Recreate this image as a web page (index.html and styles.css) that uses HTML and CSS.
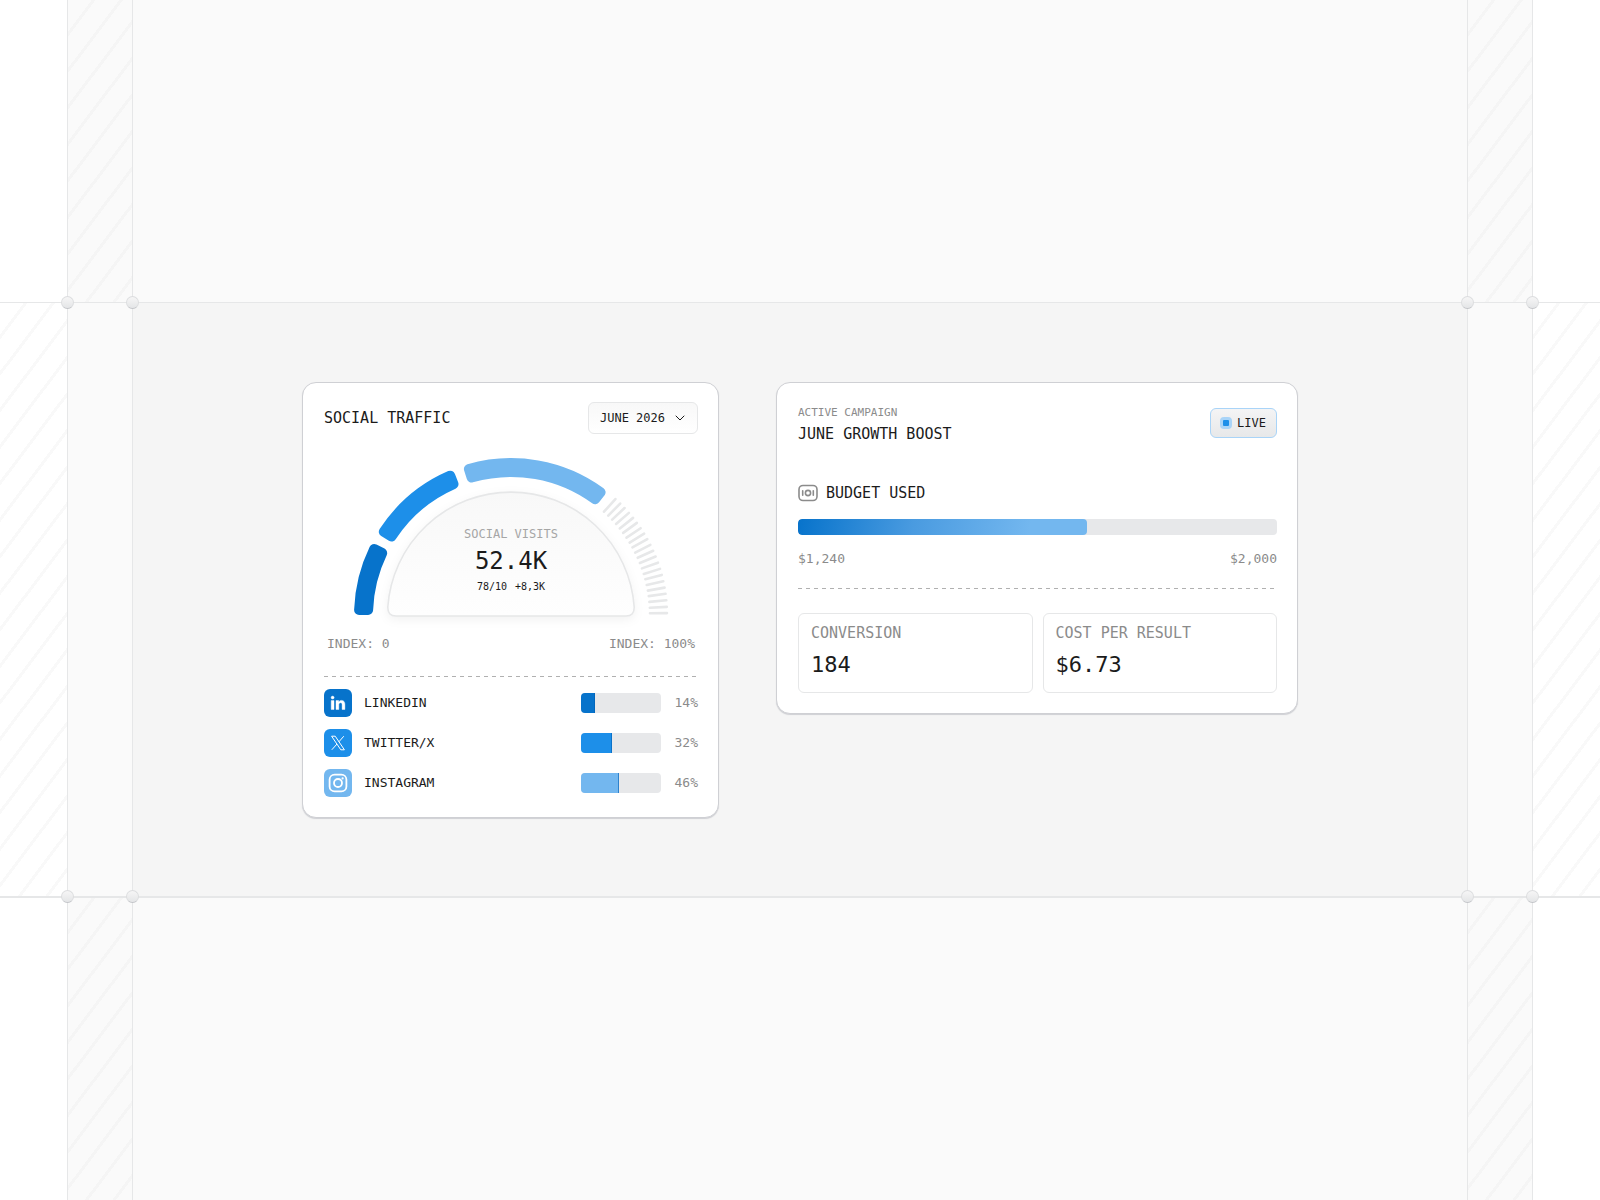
FILE: index.html
```html
<!DOCTYPE html>
<html lang="en">
<head>
    <meta charset="UTF-8">
    <meta name="viewport" content="width=device-width, initial-scale=1.0">
    <title>Social Traffic</title>
    <link rel="stylesheet" href="styles.css">
</head>
<body>
    <div class="frame">
        <div class="cell cell-white"></div>
        <div class="cell cell-soft hatched"></div>
        <div class="cell cell-soft"></div>
        <div class="cell cell-soft hatched"></div>
        <div class="cell cell-white cell-end"></div>

        <div class="cell cell-middle hatched-light">
            <span class="node node-top"></span>
            <span class="node node-bottom"></span>
        </div>
        <div class="cell cell-middle cell-soft">
            <span class="node node-top"></span>
            <span class="node node-bottom"></span>
        </div>

        <main class="cell cell-middle cell-main">
            <span class="node node-top"></span>
            <span class="node node-bottom"></span>

            <section class="card card-traffic">
                <header class="card-header">
                    <h2 class="title">SOCIAL TRAFFIC</h2>
                    <button type="button" class="month-button">
                        JUNE 2026
                        <svg class="chevron" width="12" height="12" viewBox="0 0 12 12" fill="none" stroke="currentColor" stroke-linecap="round" stroke-linejoin="round">
                            <path d="M2 4l4 4 4-4"/>
                        </svg>
                    </button>
                </header>

                <div class="gauge">
                    <svg class="gauge-chart" viewBox="0 0 314 160" aria-hidden="true">
                        <defs>
                            <linearGradient id="domeFill" x1="0" y1="0" x2="0" y2="1">
                                <stop offset="0" stop-color="#f8f8f8"/>
                                <stop offset="1" stop-color="#fefefe"/>
                            </linearGradient>
                            <path id="tick" d="M1 157H18"/>
                        </defs>
                        <path class="dome" d="M33.8 149A123.5 123.5 0 0 1 280.2 149Q280.5 158 272 158H42Q33.5 158 33.8 149Z" fill="url(#domeFill)"/>
                        <path class="segment blue-dark" d="M5.1 152A152 152 0 0 1 20.2 90.9L28.2 95A143 143 0 0 0 14.1 152Z"/>
                        <path class="segment blue" d="M29.8 73.8A152 152 0 0 1 96.2 17.7L99.5 26.1A143 143 0 0 0 37.5 78.5Z"/>
                        <path class="segment blue-light" d="M114.9 11A152 152 0 0 1 246.6 34.2L241.1 41.3A143 143 0 0 0 117.6 19.5Z"/>
                        <g class="ticks">
                            <use href="#tick" transform="rotate(132 157 157)"/>
                            <use href="#tick" transform="rotate(134.4 157 157)"/>
                            <use href="#tick" transform="rotate(136.7 157 157)"/>
                            <use href="#tick" transform="rotate(139.1 157 157)"/>
                            <use href="#tick" transform="rotate(141.5 157 157)"/>
                            <use href="#tick" transform="rotate(143.8 157 157)"/>
                            <use href="#tick" transform="rotate(146.2 157 157)"/>
                            <use href="#tick" transform="rotate(148.6 157 157)"/>
                            <use href="#tick" transform="rotate(150.9 157 157)"/>
                            <use href="#tick" transform="rotate(153.3 157 157)"/>
                            <use href="#tick" transform="rotate(155.7 157 157)"/>
                            <use href="#tick" transform="rotate(158 157 157)"/>
                            <use href="#tick" transform="rotate(160.4 157 157)"/>
                            <use href="#tick" transform="rotate(162.8 157 157)"/>
                            <use href="#tick" transform="rotate(165.1 157 157)"/>
                            <use href="#tick" transform="rotate(167.5 157 157)"/>
                            <use href="#tick" transform="rotate(169.9 157 157)"/>
                            <use href="#tick" transform="rotate(172.2 157 157)"/>
                            <use href="#tick" transform="rotate(174.6 157 157)"/>
                            <use href="#tick" transform="rotate(177 157 157)"/>
                            <use href="#tick" transform="rotate(179.3 157 157)"/>
                        </g>
                    </svg>
                    <div class="gauge-text">
                        <span class="gauge-label">SOCIAL VISITS</span>
                        <strong class="gauge-value">52.4K</strong>
                        <span class="gauge-delta"><span>78/10</span><span>+8,3K</span></span>
                    </div>
                </div>

                <div class="scale index-scale">
                    <span>INDEX: 0</span>
                    <span>INDEX: 100%</span>
                </div>

                <hr class="divider">

                <ul class="sources">
                    <li class="source">
                        <span class="source-icon blue-dark">
                            <svg width="16" height="16" viewBox="0 0 16 16" fill="#fff" stroke="#fff" stroke-width=".4">
                                <circle cx="2.6" cy="2.6" r="1.5"/>
                                <path d="M1.2 5.6h2.8v8.9H1.2zM6 5.600h2.700v1.300c.5-.9 1.500-1.500 2.700-1.500 2.700 0 3.500 1.700 3.500 4.100v5h-2.800V10c0-1.200-.2-2.300-1.500-2.300S8.800 8.700 8.800 9.900v4.600H6z"/>
                            </svg>
                        </span>
                        <span class="source-name">LINKEDIN</span>
                        <span class="bar"><span class="bar-fill blue-dark" style="width: 17%"></span></span>
                        <span class="source-value">14%</span>
                    </li>
                    <li class="source">
                        <span class="source-icon blue">
                            <svg width="16" height="16" viewBox="0 0 16 16" fill="none" stroke="#fff">
                                <path d="M1.6 1.2h3.600l9.200 13.600h-3.600z"/>
                                <path d="M13.800 1.200L8.900 6.800M7 9L1.800 14.800"/>
                            </svg>
                        </span>
                        <span class="source-name">TWITTER/X</span>
                        <span class="bar"><span class="bar-fill blue" style="width: 39%"></span></span>
                        <span class="source-value">32%</span>
                    </li>
                    <li class="source">
                        <span class="source-icon blue-light">
                            <svg width="20" height="20" viewBox="0 0 20 20" fill="none" stroke="#fff" stroke-width="1.8">
                                <rect x="1.6" y="1.6" width="16.8" height="16.8" rx="5"/>
                                <circle cx="10" cy="10" r="4"/>
                                <circle cx="14.6" cy="5.4" r="1.1" fill="#fff" stroke="none"/>
                            </svg>
                        </span>
                        <span class="source-name">INSTAGRAM</span>
                        <span class="bar"><span class="bar-fill blue-light" style="width: 48%"></span></span>
                        <span class="source-value">46%</span>
                    </li>
                </ul>
            </section>

            <section class="card card-campaign">
                <header class="card-header">
                    <div>
                        <p class="eyebrow">ACTIVE CAMPAIGN</p>
                        <h2 class="title">JUNE GROWTH BOOST</h2>
                    </div>
                    <span class="badge"><span class="badge-dot"></span>LIVE</span>
                </header>

                <h3 class="title budget-title">
                    <svg width="20" height="18" viewBox="0 0 20 18" fill="none" stroke="#8b8b8b" stroke-width="1.6" stroke-linecap="round">
                        <rect x="1" y="1.5" width="18" height="15" rx="4"/>
                        <circle cx="10" cy="9" r="2.6"/>
                        <path d="M4.7 6.8v4.4M15.3 6.8v4.4"/>
                    </svg>
                    BUDGET USED
                </h3>
                <div class="budget-bar"><div class="budget-fill" style="width: 60.4%"></div></div>
                <div class="scale">
                    <span>$1,240</span>
                    <span>$2,000</span>
                </div>

                <hr class="divider">

                <dl class="stats">
                    <div class="stat">
                        <dt>CONVERSION</dt>
                        <dd>184</dd>
                    </div>
                    <div class="stat">
                        <dt>COST PER RESULT</dt>
                        <dd>$6.73</dd>
                    </div>
                </dl>
            </section>
        </main>

        <div class="cell cell-middle cell-soft">
            <span class="node node-top"></span>
            <span class="node node-bottom"></span>
        </div>
        <div class="cell cell-middle cell-end hatched-light"></div>

        <div class="cell cell-white cell-last"></div>
        <div class="cell cell-soft cell-last hatched"></div>
        <div class="cell cell-soft cell-last"></div>
        <div class="cell cell-soft cell-last hatched"></div>
        <div class="cell cell-white cell-end cell-last"></div>
    </div>
</body>
</html>
```
FILE: styles.css
```css
* {
    box-sizing: border-box;
}
body {
    margin: 0;
    background: #fff;
    color: #1b1b1b;
    font-family: "DejaVu Sans Mono", "Liberation Mono", monospace;
}
h2, h3, p, ul, dl, dd {
    margin: 0;
    padding: 0;
    font-weight: 400;
}

/* page frame */
.frame {
    display: grid;
    grid-template-columns: 68px 65px 1fr 65px 67px;
    grid-template-rows: 1fr auto 1fr;
    min-height: 100vh;
}
.cell {
    position: relative;
    border-right: 1px solid #e6e7e8;
    border-bottom: 1px solid #e6e7e8;
}
.cell-middle {
    border-bottom-width: 2px;
}
.cell-end {
    border-right: 0;
}
.cell-last {
    border-bottom: 0;
}
.cell-soft {
    background-color: #fafafa;
}
.cell-main {
    display: flex;
    justify-content: center;
    align-items: flex-start;
    gap: 57px;
    padding: 79px 24px 78px;
    background: #f5f5f5;
}
.hatched {
    background-image: repeating-linear-gradient(127deg, transparent 0 19px, #f5f5f5 19px 22px);
}
.hatched-light {
    background-image: repeating-linear-gradient(127deg, transparent 0 19px, #f9f9f9 19px 22px);
}
.node {
    position: absolute;
    right: -7px;
    width: 13px;
    height: 13px;
    border-radius: 50%;
    background: linear-gradient(#f6f6f6, #e4e5e7);
    border: 1px solid #dcdddf;
    border-bottom-color: #c2c4c8;
    z-index: 1;
}
.node-top {
    top: -7px;
}
.node-bottom {
    bottom: -7px;
}

/* cards */
.card {
    padding: 19px 20px 20px 21px;
    background: #fff;
    border: 1px solid #cfd0d4;
    border-radius: 14px;
    box-shadow: 0 1px 1px #cfd0d4;
}
.card-traffic {
    flex: 0 1 417px;
}
.card-campaign {
    flex: 0 1 522px;
}
.card-header {
    display: flex;
    justify-content: space-between;
    align-items: center;
}
.title {
    font-size: 15px;
    line-height: 20px;
}
.month-button {
    display: flex;
    align-items: center;
    gap: 9px;
    height: 32px;
    padding: 0 11px;
    border: 1px solid #e6e7e8;
    border-radius: 6px;
    background: linear-gradient(#f8f8f8, #fff);
    color: #1b1b1b;
    font: inherit;
    font-size: 12px;
}
.divider {
    height: 1px;
    margin: 0;
    border: 0;
    background: repeating-linear-gradient(90deg, #b0b0b0 0 4px, transparent 4px 8px);
}
.blue-dark {
    fill: #0773cb;
    stroke: #0773cb;
    background-color: #0773cb;
}
.blue {
    fill: #1d8fe9;
    stroke: #1d8fe9;
    background-color: #1d8fe9;
}
.blue-light {
    fill: #73b7ef;
    stroke: #73b7ef;
    background-color: #73b7ef;
}

/* gauge */
.gauge {
    display: grid;
    width: 314px;
    margin: 24px auto 0;
}
.gauge-chart,
.gauge-text {
    grid-area: 1 / 1;
}
.gauge-chart {
    display: block;
    width: 100%;
    overflow: visible;
}
.dome {
    stroke: #e6e7e8;
    stroke-width: 1.6;
    filter: drop-shadow(0 3px 5px rgba(0, 0, 0, 0.05));
}
.segment {
    stroke-width: 10;
    stroke-linejoin: round;
}
.ticks {
    stroke: #e7e8e9;
    stroke-width: 2.6;
    stroke-linecap: round;
}
.gauge-text {
    display: flex;
    flex-direction: column;
    align-items: center;
    justify-content: flex-end;
    padding-bottom: 24px;
}
.gauge-label {
    color: #a6a6a6;
    font-size: 12px;
    line-height: 16px;
}
.gauge-value {
    margin: 3px 0;
    font-size: 24px;
    font-weight: 400;
    line-height: 32px;
}
.gauge-delta {
    display: flex;
    gap: 8px;
    font-size: 10px;
    line-height: 14px;
}
.scale {
    display: flex;
    justify-content: space-between;
    color: #8b8b8b;
    font-size: 13px;
    line-height: 20px;
}
.index-scale {
    padding: 16px 3px 22px;
}

/* sources */
.sources {
    display: flex;
    flex-direction: column;
    gap: 12px;
    margin-top: 12px;
    list-style: none;
}
.source {
    display: flex;
    align-items: center;
    gap: 12px;
    font-size: 13px;
    line-height: 20px;
}
.source-icon {
    display: grid;
    place-items: center;
    width: 28px;
    height: 28px;
    border-radius: 6px;
}
.source-name {
    flex: 1;
}
.source-value {
    min-width: 25px;
    color: #8b8b8b;
    text-align: right;
}
.bar {
    width: 80px;
    height: 20px;
    border-radius: 4px;
    background: #e7e8ea;
    overflow: hidden;
}
.bar-fill {
    display: block;
    height: 100%;
    border-right: 1px solid rgba(0, 95, 180, 0.6);
}

/* campaign */
.card-campaign .card-header {
    padding-top: 3px;
}
.eyebrow {
    color: #8b8b8b;
    font-size: 11px;
    line-height: 16px;
}
.eyebrow + .title {
    margin-top: 3px;
}
.badge {
    display: flex;
    align-items: center;
    gap: 5px;
    height: 30px;
    margin-bottom: 2px;
    padding: 0 10px 0 9px;
    border: 1px solid #a9d4f8;
    border-radius: 6px;
    background: linear-gradient(#f4f4f5, #e7e8e9);
    font-size: 12px;
}
.badge-dot {
    width: 12px;
    height: 12px;
    border: 3px solid #a9d4f8;
    border-radius: 4px;
    background: #1d8fe9;
}
.budget-title {
    display: flex;
    align-items: center;
    gap: 8px;
    margin-top: 39px;
}
.budget-bar {
    height: 16px;
    margin: 16px 0 14px;
    border-radius: 4px;
    background: #e7e8ea;
    overflow: hidden;
}
.budget-fill {
    height: 100%;
    border-radius: 4px;
    background: linear-gradient(100deg, #0773cb, #4a9be0 40%, #73b7ef 80%);
}
.card-campaign .divider {
    margin: 19px 0 24px;
}
.stats {
    display: grid;
    grid-template-columns: 1fr 1fr;
    gap: 10px;
}
.stat {
    padding: 9px 12px 11px;
    border: 1px solid #e6e7e8;
    border-radius: 6px;
}
.stat dt {
    color: #8b8b8b;
    font-size: 15px;
    line-height: 20px;
}
.stat dd {
    margin-top: 6px;
    font-size: 22px;
    line-height: 32px;
}
```
